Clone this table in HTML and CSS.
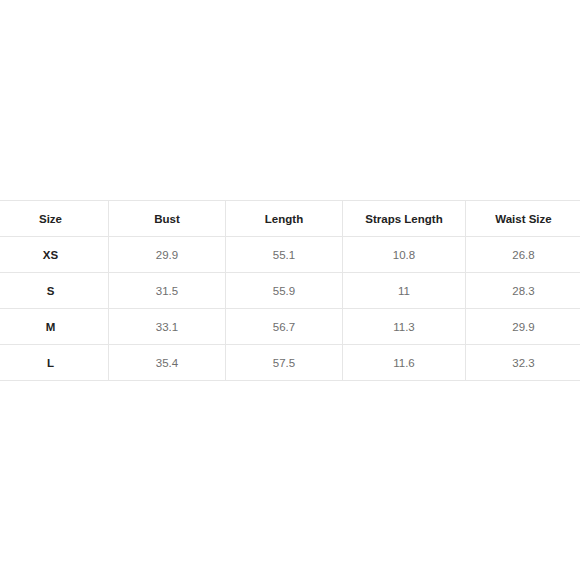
FILE: index.html
```html
<!DOCTYPE html>
<html>
<head>
<meta charset="utf-8">
<link rel="stylesheet" href="styles.css">
</head>
<body>
<div class="page">
  <table class="sizes">
    <colgroup>
      <col class="c1"><col class="c2"><col class="c3"><col class="c4"><col class="c5">
    </colgroup>
    <thead>
      <tr><th>Size</th><th>Bust</th><th>Length</th><th>Straps Length</th><th>Waist Size</th></tr>
    </thead>
    <tbody>
      <tr><th>XS</th><td>29.9</td><td>55.1</td><td>10.8</td><td>26.8</td></tr>
      <tr><th>S</th><td>31.5</td><td>55.9</td><td>11</td><td>28.3</td></tr>
      <tr><th>M</th><td>33.1</td><td>56.7</td><td>11.3</td><td>29.9</td></tr>
      <tr><th>L</th><td>35.4</td><td>57.5</td><td>11.6</td><td>32.3</td></tr>
    </tbody>
  </table>
</div>
</body>
</html>
```
FILE: styles.css
```css
html, body {
  margin: 0;
  padding: 0;
  background: #ffffff;
  overflow: hidden;
}
.page {
  width: 580px;
  height: 580px;
  overflow: hidden;
  padding-top: 200px;
  box-sizing: border-box;
}
.sizes {
  margin-left: -8px;
  width: 589px;
  border-collapse: collapse;
  table-layout: fixed;
  font-family: "Liberation Sans", Arial, sans-serif;
  font-size: 11.5px;
}
.c1 { width: 116px; }
.c2 { width: 117px; }
.c3 { width: 117px; }
.c4 { width: 123px; }
.c5 { width: 116px; }
.sizes th, .sizes td {
  height: 35px;
  padding: 0;
  text-align: center;
  vertical-align: middle;
  border: 1px solid #e6e6e6;
}
.sizes th {
  font-weight: bold;
  color: #222222;
}
.sizes td {
  color: #6e6e6e;
}
```
